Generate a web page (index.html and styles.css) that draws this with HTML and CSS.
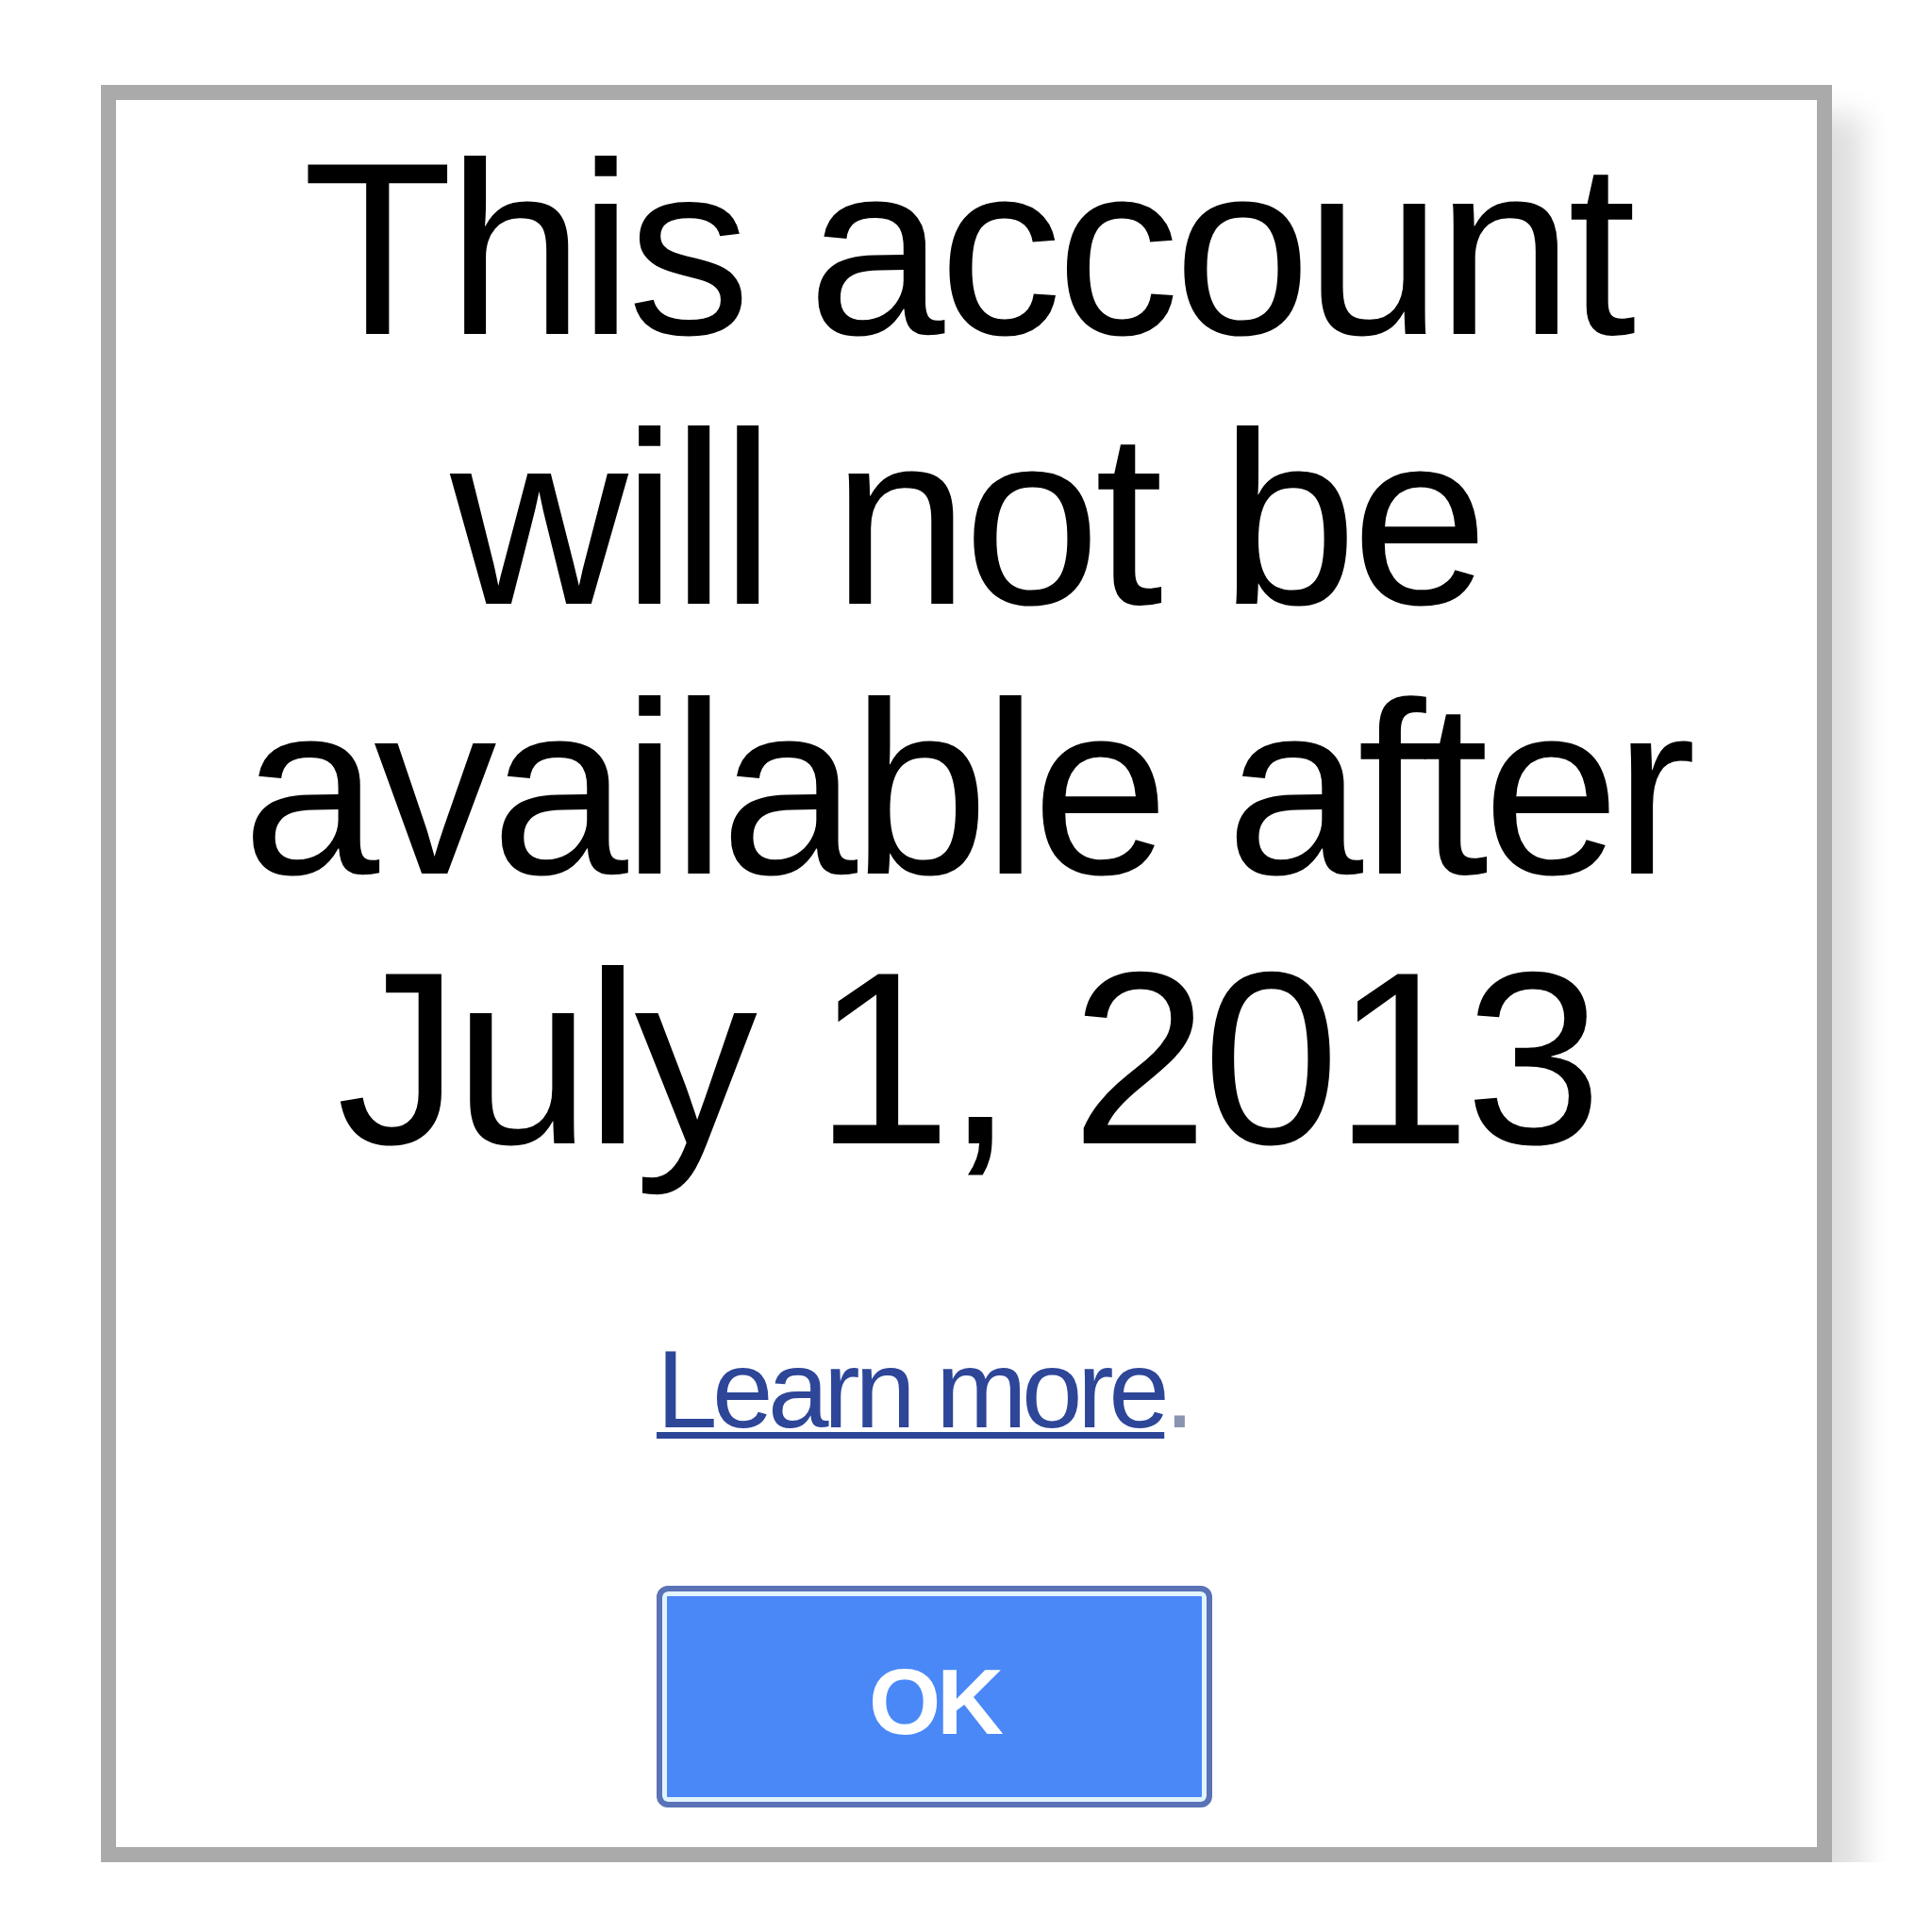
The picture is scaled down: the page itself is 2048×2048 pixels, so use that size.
FILE: index.html
```html
<!DOCTYPE html>
<html lang="en">
<head>
    <meta charset="UTF-8">
    <title>Account notice</title>
    <link rel="stylesheet" href="styles.css">
</head>
<body>

<div class="notice">
    <h1 class="notice-title">This account<br>will not be<br>available after<br>July 1, 2013</h1>

    <div class="notice-actions">
        <p class="learn"><a href="#">Learn more</a>.</p>
        <button class="ok-button">OK</button>
    </div>
</div>

</body>
</html>
```

FILE: styles.css
```css
/* Page */
body {
    margin: 0;
    background-color: #ffffff;
    font-family: "Liberation Sans", Arial, sans-serif;
}

/* Boxed notice */
.notice {
    box-sizing: border-box;
    width: 1835px;
    height: 1884px;
    margin: 90px 0 0 107px;
    padding-top: 15px;
    border: 16px solid #aaaaaa;
    background-color: #ffffff;
    box-shadow: 32px 32px 30px rgba(0, 0, 0, 0.13);
}

.notice-title {
    margin: 0;
    font-size: 261px;
    font-weight: normal;
    line-height: 286px;
    letter-spacing: -6px;
    text-align: center;
    color: #000000;
}

/* Link + button, left aligned together */
.notice-actions {
    display: flex;
    flex-direction: column;
    align-items: flex-start;
    margin: 144px 0 0 573px;
}

.learn {
    margin: 0;
    font-size: 116px;
    line-height: 128px;
    letter-spacing: -5.5px;
    color: #8a93b0;
}

.learn a {
    color: #2d4698;
    text-decoration: underline;
    text-decoration-thickness: 7px;
    text-underline-offset: 5px;
}

.ok-button {
    box-sizing: border-box;
    width: 589px;
    height: 235px;
    margin-top: 144px;
    padding-top: 12px;
    border: 6px solid #5a72b6;
    border-radius: 12px;
    background-color: #4a88f7;
    box-shadow: inset 0 0 0 5px #e2f4ff;
    color: #ffffff;
    font-family: "Liberation Sans", Arial, sans-serif;
    font-size: 98px;
    font-weight: bold;
    letter-spacing: -4px;
    cursor: pointer;
}
```
